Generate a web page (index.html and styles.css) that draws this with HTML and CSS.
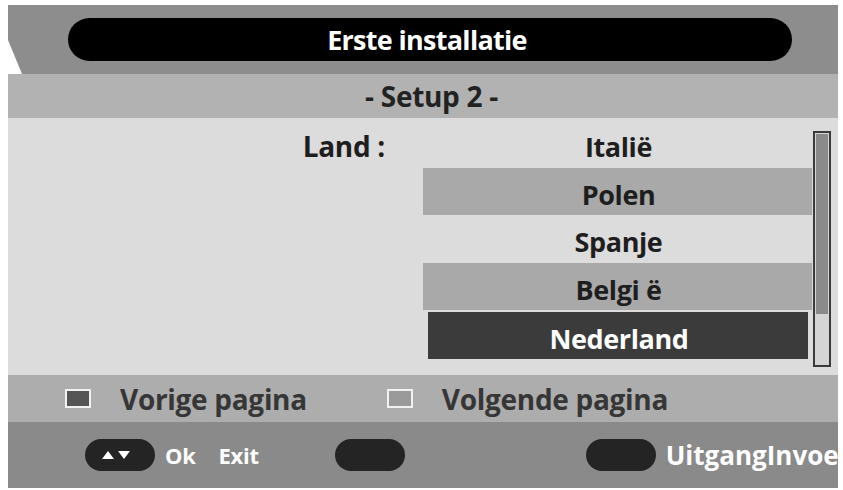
FILE: index.html
```html
<!DOCTYPE html>
<html>
<head>
<meta charset="utf-8">
<link rel="stylesheet" href="styles.css">
</head>
<body>
<div class="screen">
  <header class="title-bar">
    <div class="title-pill">Erste installatie</div>
  </header>
  <div class="subtitle">- Setup 2 -</div>
  <main class="content">
    <div class="label">Land :</div>
    <ul class="list">
      <li class="item">Italië</li>
      <li class="item alt">Polen</li>
      <li class="item">Spanje</li>
      <li class="item alt">Belgi ë</li>
      <li class="item selected">Nederland</li>
    </ul>
    <div class="scrollbar"><div class="thumb"></div></div>
  </main>
  <div class="pager">
    <div class="pager-item"><span class="swatch dark"></span><span>Vorige pagina</span></div>
    <div class="pager-item"><span class="swatch light"></span><span>Volgende pagina</span></div>
  </div>
  <div class="keys">
    <div class="key key-nav"><span class="key-pill"><svg class="arrows" width="28" height="10" viewBox="0 0 28 10"><polygon points="0,9 6,1 12,9" fill="#fff"/><polygon points="16,1 28,1 22,9" fill="#fff"/></svg></span><span class="key-text">Ok</span><span class="key-text exit">Exit</span></div>
    <div class="key key-mid"><span class="key-pill"></span></div>
    <div class="key key-last"><span class="key-pill"></span><span class="key-text wide">UitgangInvoe</span></div>
  </div>
</div>
</body>
</html>
```
FILE: styles.css
```css
html, body {
  margin: 0;
  padding: 0;
  background: #ffffff;
  overflow: hidden;
  width: 843px;
  height: 490px;
}
body {
  font-family: "Open Sans", "Liberation Sans", sans-serif;
  font-weight: 700;
}
.screen {
  margin: 5px 0 0 8px;
  width: 830px;
  display: flex;
  flex-direction: column;
}
.title-bar {
  height: 69px;
  background: #8d8d8d;
  clip-path: polygon(0 0, 100% 0, 100% 100%, 14px 100%, 0 35px);
  padding: 13px 46px 0 60px;
  box-sizing: border-box;
}
.title-pill {
  height: 43px;
  background: #000;
  border-radius: 22px;
  color: #fff;
  font-size: 27px;
  letter-spacing: -0.7px;
  display: flex;
  align-items: center;
  justify-content: center;
  padding-right: 6px;
}
.subtitle {
  height: 44px;
  background: #b2b2b2;
  color: #222;
  font-size: 28px;
  letter-spacing: -0.3px;
  display: flex;
  align-items: center;
  justify-content: center;
  padding-left: 17px;
}
.content {
  height: 257px;
  background: #dcdcdc;
  display: flex;
  align-items: flex-start;
  box-sizing: border-box;
  padding-top: 2px;
}
.label {
  width: 377px;
  text-align: right;
  font-size: 28px;
  letter-spacing: -0.3px;
  color: #1e1e1e;
  padding-top: 9px;
  line-height: 34px;
}
.list {
  list-style: none;
  margin: 0 0 0 38px;
  padding: 0;
  width: 389px;
}
.item {
  height: 47.5px;
  box-sizing: border-box;
  display: flex;
  align-items: center;
  justify-content: center;
  font-size: 27px;
  letter-spacing: -0.4px;
  color: #1e1e1e;
  padding: 6px 0 0 2px;
}
.item.alt {
  background: #a9a9a9;
}
.item.selected {
  background: #3b3b3b;
  color: #fff;
  margin: 2px 4px 0 5px;
  height: 47px;
}
.scrollbar {
  margin: 11px 0 0 1px;
  width: 18px;
  height: 236px;
  box-sizing: border-box;
  border: 2px solid #3a3a3a;
  background: #d4d4d4;
  padding: 1px;
}
.thumb {
  height: 180px;
  background: #8a8a8a;
}
.pager {
  height: 47px;
  background: #adadad;
  display: flex;
  align-items: center;
  padding-left: 57px;
}
.pager-item {
  display: flex;
  align-items: center;
  font-size: 28px;
  letter-spacing: -0.3px;
  color: #363636;
}
.pager-item + .pager-item {
  margin-left: 80px;
}
.swatch {
  width: 26px;
  height: 19px;
  border: 2px solid #f2f2f2;
  box-sizing: border-box;
  margin-right: 29px;
}
.swatch.dark { background: #555; }
.swatch.light { background: #9a9a9a; }
.keys {
  height: 66px;
  background: #8a8a8a;
  display: flex;
  align-items: center;
  padding-left: 77px;
  color: #fff;
  font-size: 22px;
  letter-spacing: -0.3px;
}
.key {
  display: flex;
  align-items: center;
}
.key-pill {
  width: 70px;
  height: 32px;
  border-radius: 16px;
  background: #242424;
  display: flex;
  align-items: center;
  justify-content: center;
}
.arrows {
  display: block;
  margin-right: 8px;
}
.key-text {
  margin-left: 10px;
  white-space: nowrap;
}
.key-text.exit {
  margin-left: 23px;
}
.key-text.wide {
  font-size: 26px;
  letter-spacing: 0;
}
.key-mid {
  margin-left: 76px;
}
.key-last {
  margin-left: 181px;
}
```
